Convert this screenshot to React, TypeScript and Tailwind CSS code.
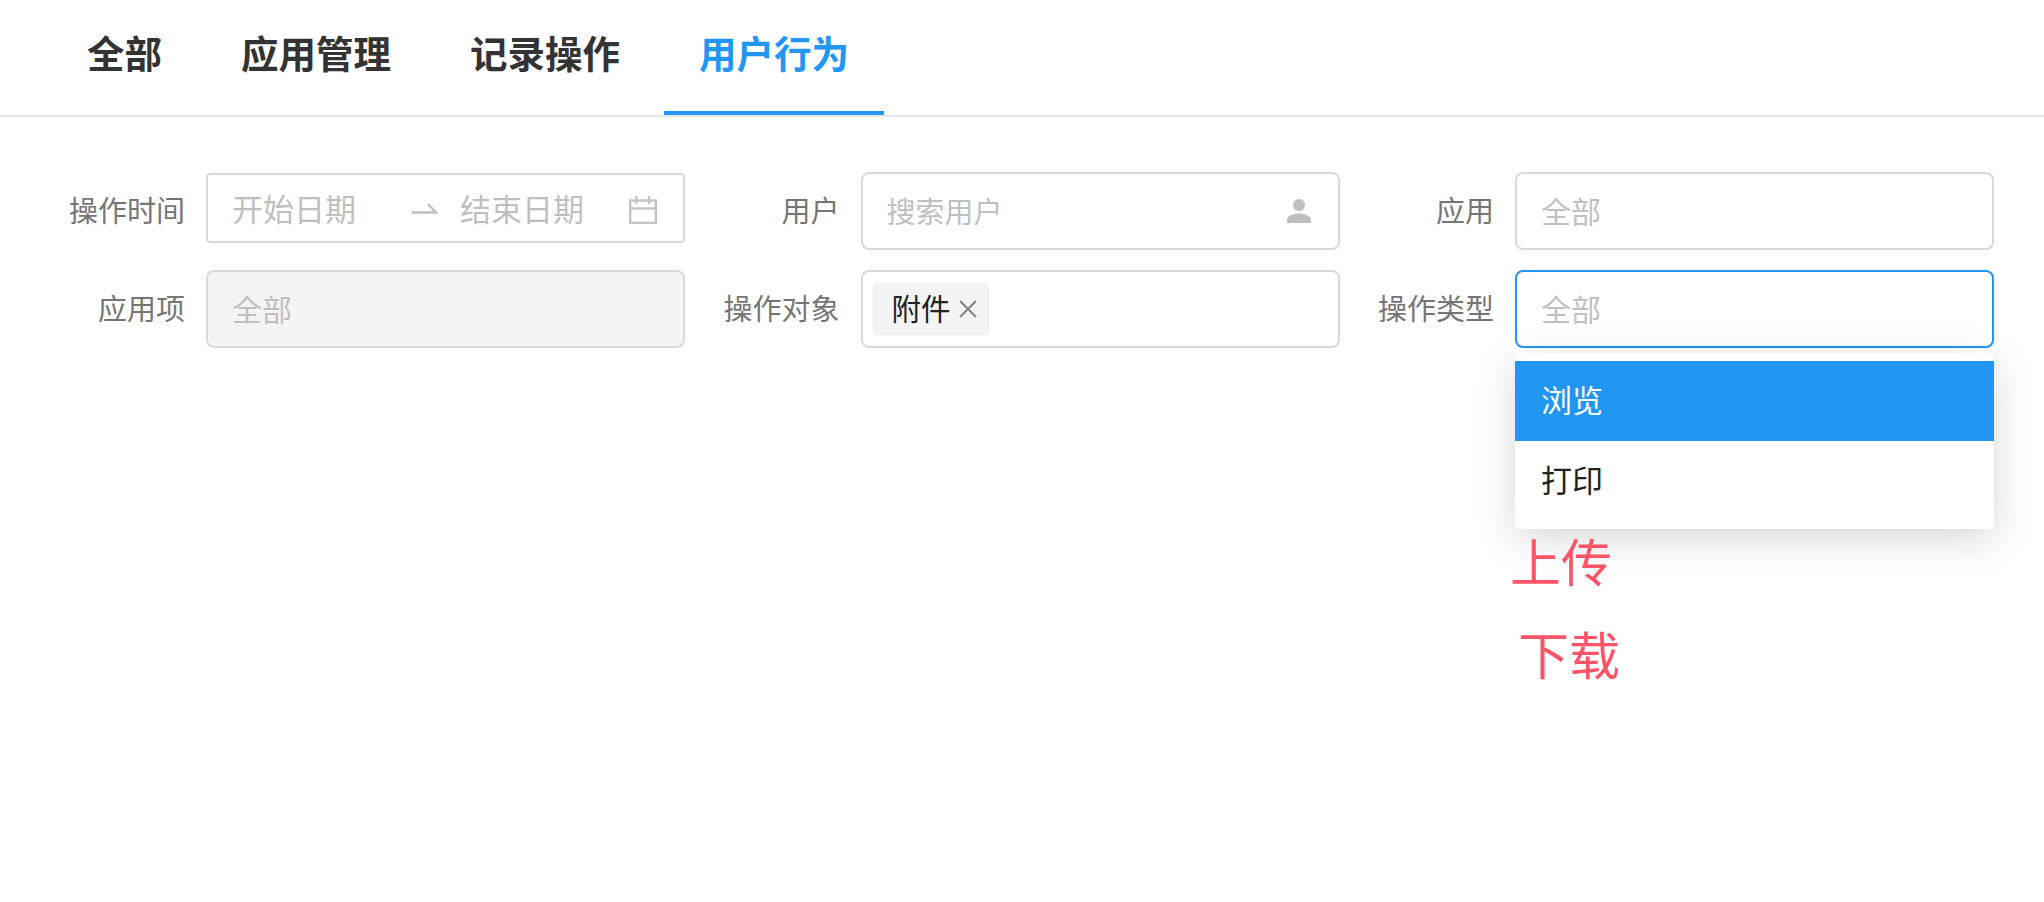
const tabs = ["全部", "应用管理", "记录操作", "用户行为"];

function Label({ text }: { text: string }) {
  return <label className="w-[132px] shrink-0 pb-[3px] text-right text-[29px] leading-none text-[#757575]">{text}</label>;
}

function Placeholder({ text }: { text: string }) {
  return <span className="pb-[2px] text-[30px] leading-none text-[#bfbfbf]">{text}</span>;
}

function CalendarIcon() {
  return (
    <svg width="28" height="28" viewBox="0 0 28 28" fill="none" stroke="#c4c4c4" strokeWidth="2.400">
      <rect x="1.200" y="4.500" width="25.600" height="22.300" />
      <path d="M1 12.500h26" />
      <path d="M7.500 0v8M20 0v8" />
    </svg>
  );
}

function UserIcon() {
  return (
    <svg width="26" height="24" viewBox="0 0 26 24" fill="#bfbfbf">
      <circle cx="13" cy="6" r="6" />
      <path d="M1 24v-3c0-4 6-6.500 12-6.500s12 2.500 12 6.500v3z" />
    </svg>
  );
}

function HalfArrow() {
  return (
    <svg width="26" height="12" viewBox="0 0 26 12" fill="none" stroke="#bfbfbf" strokeWidth="2.400">
      <path d="M0 10.500h24L16 2" />
    </svg>
  );
}

export default function App() {
  return (
    <div className="min-h-[902px] bg-white font-['Noto_Sans_CJK_SC','Noto_Sans',sans-serif]">
      <div className="flex h-[117px] gap-[9px] border-b-2 border-[#e8e8e8] pl-[52px]">
        {tabs.map((tab, i) => (
          <div
            key={tab}
            className={
              i === 3
                ? "flex h-[115px] items-center border-b-4 border-[#2196f3] px-[35px] pb-[7px] text-[37.500px] font-bold text-[#2196f3]"
                : "flex h-[115px] items-center px-[35px] pb-[11px] text-[37.500px] font-bold text-[#333333]"
            }
          >
            {tab}
          </div>
        ))}
      </div>

      <div className="grid w-fit grid-cols-[654.500px_654.500px_654.500px] gap-y-[20px] pl-[53px] pt-[55px]">
        <div className="flex items-center gap-[21px]">
          <Label text="操作时间" />
          <div className="mt-[-6px] flex h-[70px] w-[479px] items-center rounded-[4px] border-2 border-[#d9d9d9] pl-[24px] pr-[26px]">
            <span className="flex pb-[2px] text-[31px] leading-none text-[#bfbfbf]">开始日期</span>
            <span className="ml-[56px] mr-[22px] flex"><HalfArrow /></span>
            <span className="flex pb-[2px] text-[31px] leading-none text-[#bfbfbf]">结束日期</span>
            <span className="ml-auto mt-[3px] flex"><CalendarIcon /></span>
          </div>
        </div>
        <div className="flex items-center gap-[21px]">
          <Label text="用户" />
          <div className="flex h-[78px] w-[479px] items-center justify-between rounded-[8px] border-2 border-[#d9d9d9] pl-[24px] pr-[26px]">
            <span className="pb-[2px] text-[29px] leading-none text-[#bfbfbf]">搜索用户</span>
            <UserIcon />
          </div>
        </div>
        <div className="flex items-center gap-[21px]">
          <Label text="应用" />
          <div className="flex h-[78px] w-[479px] items-center rounded-[8px] border-2 border-[#d9d9d9] pl-[24px]">
            <Placeholder text="全部" />
          </div>
        </div>

        <div className="flex items-center gap-[21px]">
          <Label text="应用项" />
          <div className="flex h-[78px] w-[479px] items-center rounded-[8px] border-2 border-[#d9d9d9] bg-[#f4f4f4] pl-[24px]">
            <Placeholder text="全部" />
          </div>
        </div>
        <div className="flex items-center gap-[21px]">
          <Label text="操作对象" />
          <div className="flex h-[78px] w-[479px] items-center rounded-[8px] border-2 border-[#d9d9d9] pl-[10px]">
            <div className="flex h-[52px] items-center gap-[7px] rounded-[4px] border border-[#eeeeee] bg-[#f4f4f4] pl-[18px] pr-[10px]">
              <span className="pb-[2px] text-[29.500px] leading-none text-[#222222]">附件</span>
              <svg width="20" height="20" viewBox="0 0 20 20" stroke="#808080" strokeWidth="2">
                <path d="M2 2l16 16M18 2L2 18" />
              </svg>
            </div>
          </div>
        </div>
        <div className="flex items-center gap-[21px]">
          <Label text="操作类型" />
          <div className="relative">
            <div className="flex h-[78px] w-[479px] items-center rounded-[8px] border-2 border-[#2196f3] pl-[24px]">
              <Placeholder text="全部" />
            </div>
            <div className="absolute left-0 top-[83px] w-[479px]">
              <div className="rounded-[4px] bg-white py-[8px] shadow-[0_10px_40px_rgba(0,0,0,0.16)]">
                <div className="flex h-[80px] items-center bg-[#2196f3] pb-[4px] pl-[26px] text-[31px] text-white">浏览</div>
                <div className="flex h-[80px] items-center pb-[4px] pl-[26px] text-[31px] text-[#222222]">打印</div>
              </div>
              <div className="mt-[-15px] text-[51px] leading-[93px] text-[#ff5468]">
                <div className="ml-[-5px]">上传</div>
                <div className="ml-[3px]">下载</div>
              </div>
            </div>
          </div>
        </div>
      </div>
    </div>
  );
}
